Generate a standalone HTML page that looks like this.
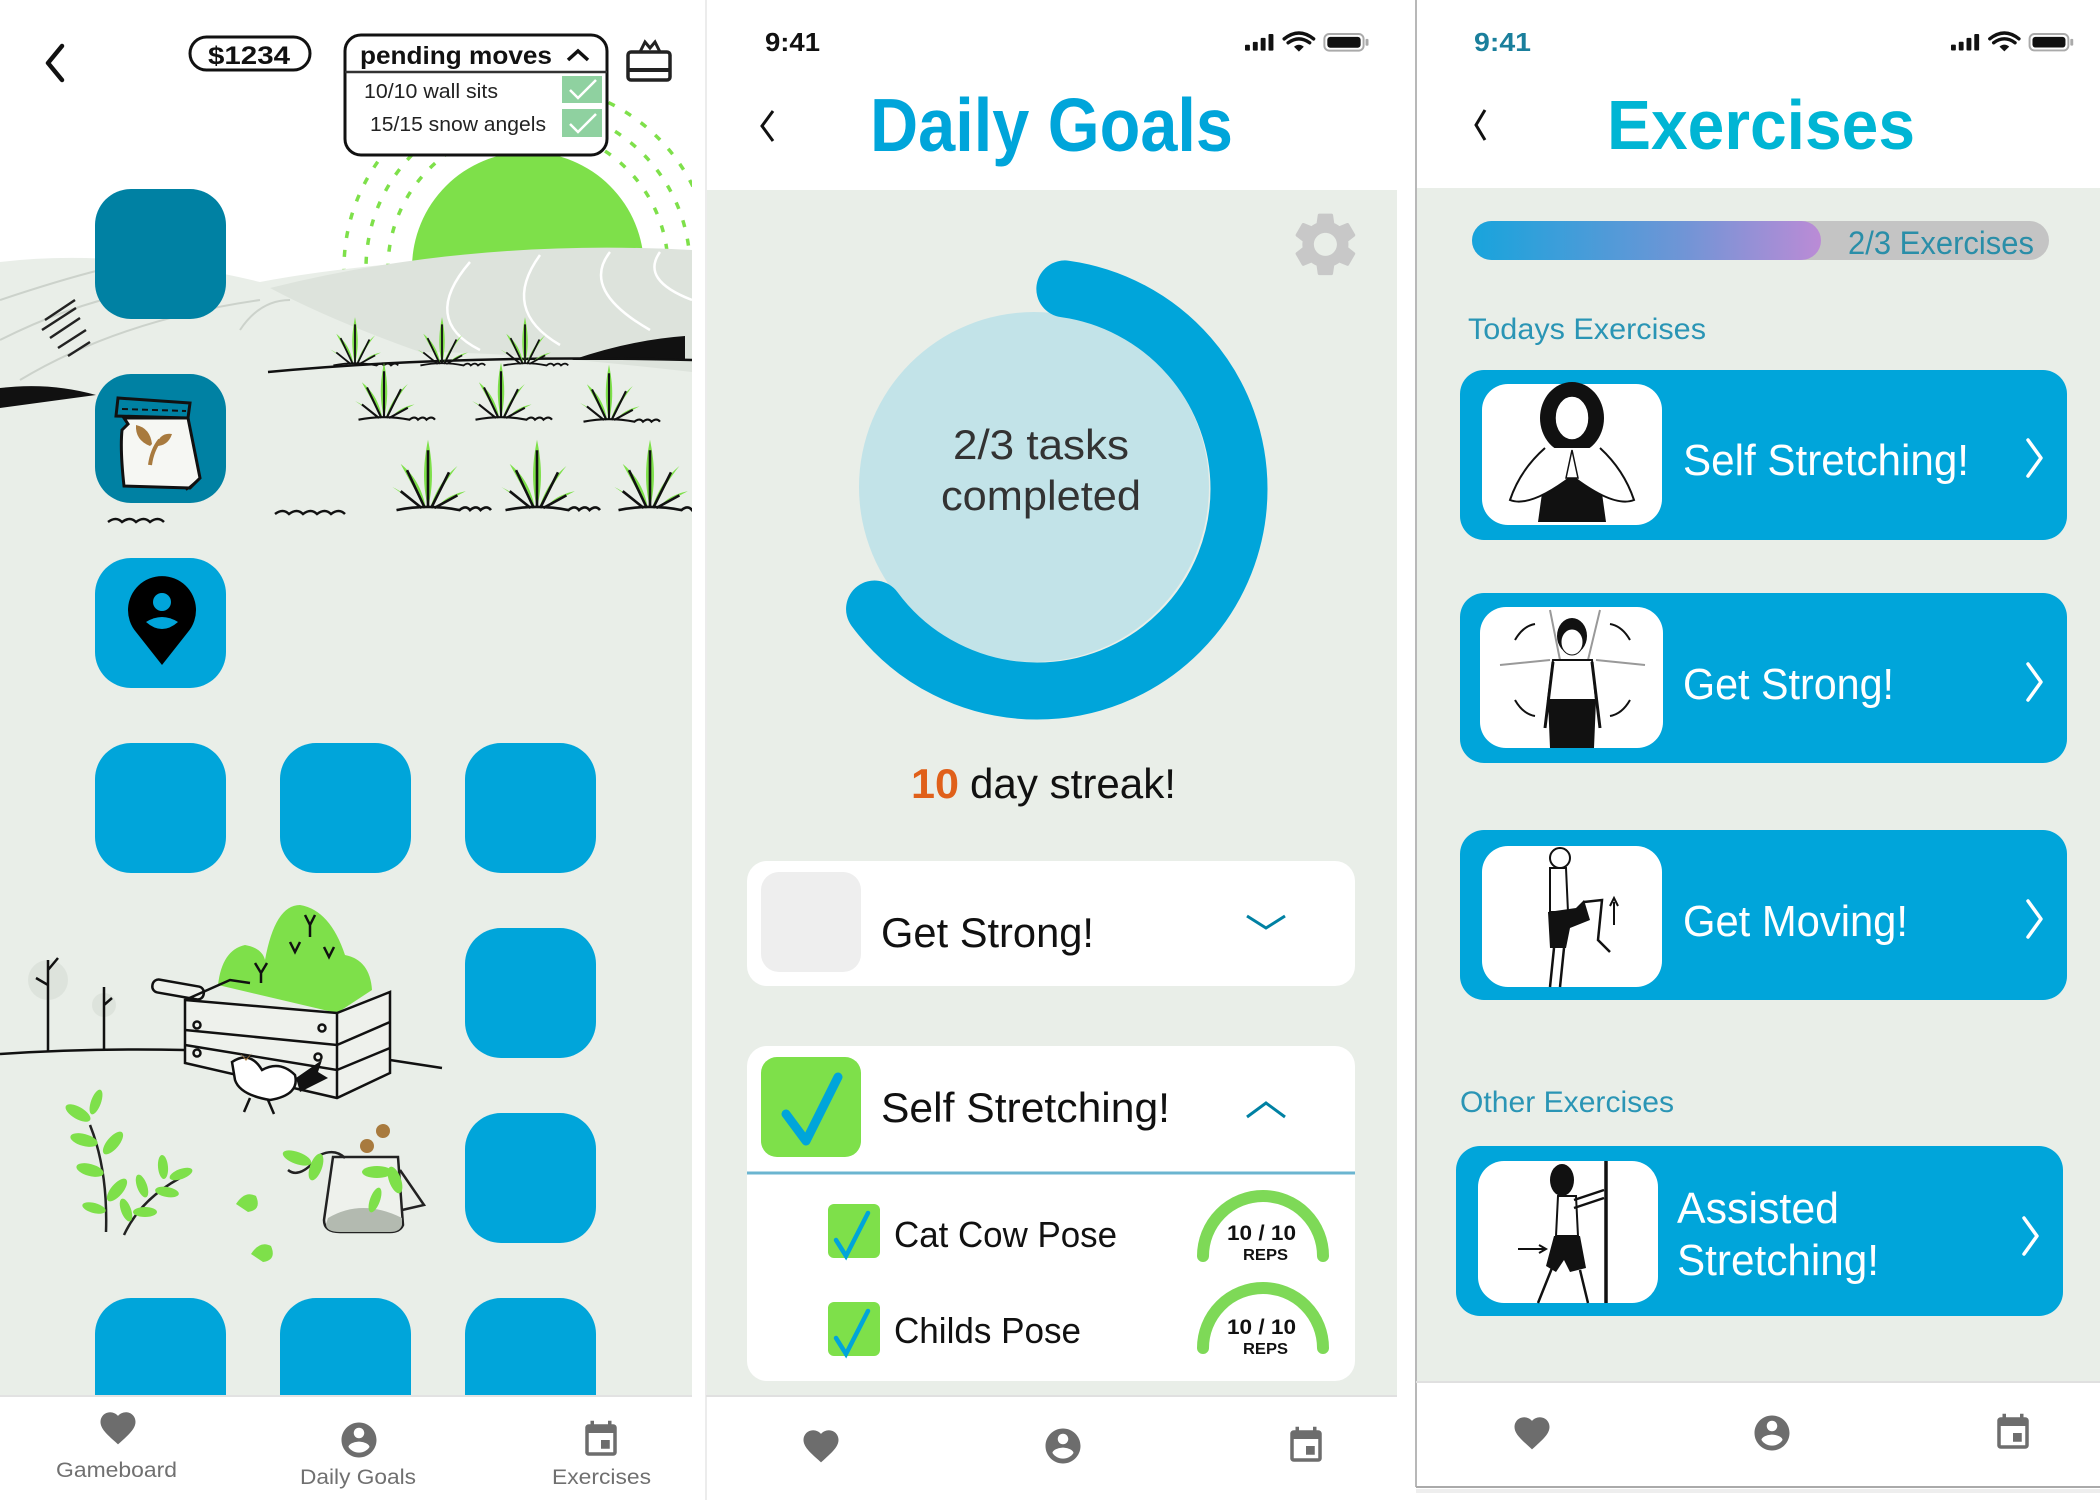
<!DOCTYPE html>
<html><head><meta charset="utf-8"><style>
html,body{margin:0;padding:0;background:#fff;width:2100px;height:1500px;overflow:hidden}
svg{display:block}
text{font-family:"Liberation Sans",Arial,sans-serif}
</style></head><body>
<svg width="2100" height="1500" viewBox="0 0 2100 1500" xmlns="http://www.w3.org/2000/svg">
<defs>
<clipPath id="p1clip"><rect x="0" y="0" width="692" height="1396"/></clipPath>
<g id="grass">
 <path d="M0 0 C-6 -25 -4 -45 0 -65 C4 -45 6 -25 0 0Z" fill="#7ee04a"/>
 <path d="M-4 0 C-12 -18 -20 -30 -26 -42 C-14 -32 -6 -20 -2 0Z" fill="#7ee04a"/>
 <path d="M4 0 C12 -18 20 -30 28 -40 C16 -30 8 -18 2 0Z" fill="#7ee04a"/>
 <path d="M-8 0 C-16 -10 -26 -16 -34 -20 C-22 -12 -14 -6 -6 0Z" fill="#7ee04a"/>
 <path d="M8 0 C16 -10 26 -14 36 -16 C24 -10 14 -4 6 0Z" fill="#7ee04a"/>
 <path d="M0 0 L0 -55 M-3 0 L-20 -36 M3 0 L20 -34 M-6 0 L-26 -16 M6 0 L28 -12" stroke="#111" stroke-width="2.5" fill="none"/>
 <path d="M-30 2 Q0 -4 30 2 q6 -5 10 0 q6 -5 10 0 q6 -5 10 0" stroke="#111" stroke-width="2.5" fill="none"/>
</g>
<path id="heart" d="M12 21.35l-1.45-1.32C5.4 15.36 2 12.28 2 8.5 2 5.420 4.42 3 7.5 3c1.74 0 3.41.81 4.5 2.09C13.09 3.81 14.76 3 16.5 3 19.58 3 22 5.42 22 8.5c0 3.78-3.4 6.86-8.55 11.54L12 21.35z"/>
<path id="person" d="M12 2C6.48 2 2 6.48 2 12s4.48 10 10 10 10-4.48 10-10S17.52 2 12 2zm0 3c1.66 0 3 1.34 3 3s-1.34 3-3 3-3-1.34-3-3 1.34-3 3-3zm0 14.2c-2.5 0-4.710-1.28-6-3.22.03-1.99 4-3.08 6-3.08 1.99 0 5.97 1.09 6 3.080-1.29 1.94-3.5 3.22-6 3.22z"/>
<path id="cal" d="M17 12h-5v5h5v-5zM16 1v2H8V1H6v2H5c-1.11 0-1.99.9-1.99 2L3 19c0 1.1.89 2 2 2h14c1.1 0 2-.9 2-2V5c0-1.1-.9-2-2-2h-1V1h-2zm3 18H5V8h14v11z"/>
<g id="status">
 <rect x="0" y="12" width="5" height="6" rx="1" fill="#111"/>
 <rect x="8" y="9" width="5" height="9" rx="1" fill="#111"/>
 <rect x="16" y="5" width="5" height="13" rx="1" fill="#111"/>
 <rect x="24" y="1" width="5" height="17" rx="1" fill="#111"/>
 <path d="M40 6 Q55 -6 70 6 M44 10 Q55 2 66 10" stroke="#111" stroke-width="3.5" fill="none" stroke-linecap="round"/>
 <path d="M50 14 L55 19 L60 14 Q55 10 50 14Z" fill="#111"/>
 <rect x="81" y="1" width="40" height="17" rx="5" fill="none" stroke="#aaa" stroke-width="2"/>
 <rect x="84" y="4" width="34" height="11" rx="3" fill="#111"/>
 <rect x="123" y="6" width="3" height="7" rx="1" fill="#aaa"/>
</g>
<linearGradient id="pg" x1="0" x2="1"><stop offset="0" stop-color="#18a4dc"/><stop offset="0.6" stop-color="#6f95d6"/><stop offset="1" stop-color="#bb8bd6"/></linearGradient>
</defs>

<!-- ============ PANEL 1 ============ -->
<rect x="0" y="0" width="692" height="1500" fill="#fff"/>
<g clip-path="url(#p1clip)">
<g fill="none" stroke="#7ee04a" stroke-width="3.5" stroke-dasharray="7 12">
 <circle cx="528" cy="268" r="140"/><circle cx="528" cy="268" r="162"/><circle cx="528" cy="268" r="184"/>
</g>
<circle cx="528" cy="268" r="116" fill="#7ee04a"/>
<path d="M0 262 Q120 248 260 282 Q420 252 692 252 L692 1396 L0 1396Z" fill="#e9eee8"/>
<path d="M270 288 Q470 238 692 250 L692 372 Q520 352 420 352 Q330 320 270 288Z" fill="#dde3dc"/>
<g fill="none" stroke="#fff" stroke-width="2.5">
 <path d="M470 262 Q420 320 480 350"/><path d="M540 255 Q500 310 560 345"/><path d="M610 252 Q580 290 650 330"/><path d="M660 252 Q640 280 692 300"/>
</g>
<g fill="none" stroke="#ccd2cb" stroke-width="2">
 <path d="M0 300 Q60 280 100 270"/><path d="M0 340 Q80 300 150 290"/><path d="M20 380 Q120 320 260 300"/><path d="M240 330 Q260 300 290 300"/>
</g>
<g stroke="#222" stroke-width="2.5">
 <path d="M45 320 l30 -20 M42 330 l34 -22 M50 338 l30 -20 M58 348 l28 -18 M68 356 l22 -14"/>
</g>
<path d="M0 408 L0 388 Q50 382 96 395Z" fill="#111"/>
<path d="M572 360 Q630 340 685 336 L685 360Z" fill="#111"/>
<path d="M268 372 Q460 354 692 360" stroke="#111" stroke-width="2.5" fill="none"/>
<path d="M275 514 q8 -6 14 0 q8 -6 14 0 q8 -6 14 0 q8 -6 14 0 q8 -6 14 0" stroke="#111" stroke-width="2.5" fill="none"/>
<path d="M108 522 q8 -6 14 0 q8 -6 14 0 q8 -6 14 0 q8 -6 14 0" stroke="#111" stroke-width="2.5" fill="none"/>
<use href="#grass" transform="translate(355,364) scale(0.72)"/>
<use href="#grass" transform="translate(442,364) scale(0.72)"/>
<use href="#grass" transform="translate(525,364) scale(0.72)"/>
<use href="#grass" transform="translate(384,418) scale(0.85)"/>
<use href="#grass" transform="translate(501,418) scale(0.85)"/>
<use href="#grass" transform="translate(609,420) scale(0.85)"/>
<use href="#grass" transform="translate(428,508) scale(1.05)"/>
<use href="#grass" transform="translate(537,508) scale(1.05)"/>
<use href="#grass" transform="translate(650,508) scale(1.05)"/>

<g>
 <rect x="95" y="189" width="131" height="130" rx="36" fill="#0081a3"/>
 <rect x="95" y="374" width="131" height="129" rx="36" fill="#0081a3"/>
 <rect x="95" y="558" width="131" height="130" rx="36" fill="#00a5da"/>
 <rect x="95" y="743" width="131" height="130" rx="36" fill="#00a5da"/>
 <rect x="280" y="743" width="131" height="130" rx="36" fill="#00a5da"/>
 <rect x="465" y="743" width="131" height="130" rx="36" fill="#00a5da"/>
 <rect x="465" y="928" width="131" height="130" rx="36" fill="#00a5da"/>
 <rect x="465" y="1113" width="131" height="130" rx="36" fill="#00a5da"/>
 <rect x="95" y="1298" width="131" height="140" rx="36" fill="#00a5da"/>
 <rect x="280" y="1298" width="131" height="140" rx="36" fill="#00a5da"/>
 <rect x="465" y="1298" width="131" height="140" rx="36" fill="#00a5da"/>
</g>
<path d="M124 418 L188 418 L200 478 L190 488 L124 486 Q120 450 122 430 L128 424Z" fill="#f6f7f3" stroke="#111" stroke-width="3"/>
<path d="M188 418 L200 478 L186 490" fill="none" stroke="#111" stroke-width="2"/>
<path d="M118 398 L190 403 L188 418 L116 416Z" fill="#0081a3" stroke="#111" stroke-width="3"/>
<path d="M122 409 L186 411" stroke="#111" stroke-width="2" stroke-dasharray="6 4"/>
<path d="M150 465 Q152 450 160 440" stroke="#a87a3e" stroke-width="4" fill="none"/>
<path d="M150 446 Q135 440 136 425 Q150 428 152 444Z" fill="#a87a3e"/>
<path d="M156 446 Q160 432 172 434 Q168 446 156 446Z" fill="#a87a3e"/>
<path d="M162 665 L136 632 A34 34 0 1 1 188 632 Z" fill="#000"/>
<circle cx="162" cy="602" r="9" fill="#00a5da"/>
<path d="M146 622 Q162 612 178 622 Q162 636 146 622Z" fill="#00a5da"/>

<g fill="none" stroke="#111" stroke-width="2.5">
 <path d="M0 1054 Q90 1048 185 1050"/>
 <path d="M390 1060 L442 1068"/>
 <circle cx="48" cy="980" r="20" fill="#dde3dc" stroke="none"/>
 <circle cx="104" cy="1005" r="12" fill="#dde3dc" stroke="none"/>
 <path d="M48 1052 L48 960 M48 985 L36 978 M48 970 L58 958"/>
 <path d="M104 1050 L104 987 M104 1005 L112 998"/>
</g>
<path d="M218 985 Q222 950 245 945 Q262 948 265 960 Q275 905 300 905 Q330 910 345 955 Q370 960 372 990 L337 1013 Z" fill="#7ee04a"/>
<g stroke="#111" stroke-width="2.5" fill="none">
 <path d="M255 963 l6 10 l6 -10 M261 973 l0 10 M305 915 l5 10 l5 -10 M310 925 l0 12 M290 942 l5 10 l5 -10 M324 947 l5 10 l5 -10"/>
</g>
<g stroke="#111" stroke-width="2.5" fill="#eef1ec">
 <rect x="152" y="983" width="52" height="13" rx="6" transform="rotate(10 178 990)"/>
 <path d="M185 1000 L337 1013 L390 992 L390 1073 L337 1098 L185 1063Z"/>
 <path d="M185 1000 L230 980 L250 983" fill="none"/>
 <path d="M337 1013 L337 1098 M185 1030 L337 1045 L390 1022 M185 1045 L337 1070 L390 1048" fill="none"/>
 <circle cx="197" cy="1025" r="3.5" fill="none"/><circle cx="322" cy="1028" r="3.5" fill="none"/>
 <circle cx="197" cy="1053" r="3.5" fill="none"/><circle cx="318" cy="1057" r="3.5" fill="none"/>
</g>
<path d="M232 1062 Q250 1050 262 1070 Q280 1060 295 1075 Q300 1095 270 1100 Q240 1095 235 1080Z" fill="#fff" stroke="#111" stroke-width="2.5"/>
<path d="M296 1078 L322 1060 L318 1072 L328 1078 L300 1092Z" fill="#111"/>
<path d="M240 1053 l6 6 l6 -6 l-6 8Z" fill="#a87a3e"/>
<path d="M250 1098 l-6 14 M268 1100 l6 14" stroke="#111" stroke-width="2.5"/>
<g stroke="#222" stroke-width="2.5" fill="none">
 <path d="M106 1232 Q108 1170 90 1125"/><path d="M124 1235 Q140 1200 180 1178"/>
</g>
<g fill="#7ee04a">
 <ellipse cx="78" cy="1113" rx="14" ry="6" transform="rotate(30 78 1113)"/>
 <ellipse cx="96" cy="1102" rx="13" ry="5" transform="rotate(-70 96 1102)"/>
 <ellipse cx="84" cy="1140" rx="14" ry="6" transform="rotate(15 84 1140)"/>
 <ellipse cx="113" cy="1143" rx="14" ry="6" transform="rotate(-50 113 1143)"/>
 <ellipse cx="90" cy="1170" rx="14" ry="6" transform="rotate(15 90 1170)"/>
 <ellipse cx="117" cy="1190" rx="14" ry="6" transform="rotate(-50 117 1190)"/>
 <ellipse cx="94" cy="1208" rx="12" ry="5" transform="rotate(15 94 1208)"/>
 <ellipse cx="126" cy="1210" rx="12" ry="5" transform="rotate(70 126 1210)"/>
 <ellipse cx="145" cy="1212" rx="12" ry="5"/>
 <ellipse cx="142" cy="1186" rx="12" ry="5" transform="rotate(70 142 1186)"/>
 <ellipse cx="167" cy="1192" rx="12" ry="5" transform="rotate(10 167 1192)"/>
 <ellipse cx="163" cy="1167" rx="12" ry="5" transform="rotate(85 163 1167)"/>
 <ellipse cx="181" cy="1174" rx="12" ry="5" transform="rotate(-20 181 1174)"/>
 <path d="M236 1204 Q245 1190 256 1196 Q262 1210 248 1212Z"/>
 <path d="M251 1254 Q260 1240 271 1246 Q277 1260 263 1262Z"/>
</g>
<path d="M333 1157 L398 1157 L403 1225 Q400 1232 390 1232 L340 1232 Q324 1232 324 1220 Z" fill="#eef1ec" stroke="#222" stroke-width="2.5"/>
<path d="M328 1218 Q362 1198 402 1218 L402 1225 Q400 1232 390 1232 L340 1232 Q326 1232 326 1224Z" fill="#b3bab0"/>
<path d="M400 1170 L424 1205 L402 1210" fill="none" stroke="#222" stroke-width="2.5"/>
<path d="M288 1170 Q300 1180 320 1155 Q335 1148 345 1158" fill="none" stroke="#222" stroke-width="2.5"/>
<circle cx="383" cy="1131" r="7" fill="#a87a3e"/><circle cx="367" cy="1146" r="7" fill="#a87a3e"/>
<g fill="#7ee04a"><ellipse cx="297" cy="1158" rx="15" ry="6" transform="rotate(20 297 1158)"/><ellipse cx="316" cy="1167" rx="14" ry="6" transform="rotate(-70 316 1167)"/><ellipse cx="377" cy="1172" rx="15" ry="6"/><ellipse cx="395" cy="1180" rx="14" ry="6" transform="rotate(70 395 1180)"/><ellipse cx="375" cy="1200" rx="13" ry="5" transform="rotate(-70 375 1200)"/></g>

<polyline points="62,46 48,63 62,80" fill="none" stroke="#111" stroke-width="4.5" stroke-linecap="round" stroke-linejoin="round"/>
<rect x="190" y="37" width="120" height="33" rx="16.5" fill="#fff" stroke="#111" stroke-width="3"/>
<text x="208" y="64" font-size="25" font-weight="bold" fill="#111" textLength="82" lengthAdjust="spacingAndGlyphs">$1234</text>
<rect x="345" y="35" width="262" height="120" rx="16" fill="#fff" stroke="#111" stroke-width="3"/>
<line x1="345" y1="72" x2="607" y2="72" stroke="#333" stroke-width="2.5"/>
<text x="360" y="64" font-size="25" font-weight="bold" fill="#111" textLength="192" lengthAdjust="spacingAndGlyphs">pending moves</text>
<polyline points="568,60 578,51 588,60" fill="none" stroke="#111" stroke-width="3.5"/>
<text x="364" y="98" font-size="20" fill="#222" textLength="134" lengthAdjust="spacingAndGlyphs">10/10 wall sits</text>
<text x="370" y="131" font-size="20" fill="#222" textLength="176" lengthAdjust="spacingAndGlyphs">15/15 snow angels</text>
<rect x="562" y="76" width="40" height="27" fill="#8fd1a0"/><rect x="562" y="109" width="40" height="28" fill="#8fd1a0"/>
<polyline points="570,90 578,98 596,80" fill="none" stroke="#fff" stroke-width="2.5"/>
<polyline points="570,124 578,132 596,114" fill="none" stroke="#fff" stroke-width="2.5"/>
<rect x="628" y="52" width="42" height="28" rx="3" fill="#fff" stroke="#222" stroke-width="3.5"/>
<line x1="628" y1="70" x2="670" y2="70" stroke="#222" stroke-width="4"/>
<path d="M640 52 L645 42 L650 48 L655 42 L660 52" fill="none" stroke="#222" stroke-width="3"/>
</g>

<rect x="0" y="1396" width="692" height="104" fill="#fff"/>
<line x1="0" y1="1396" x2="692" y2="1396" stroke="#e2e2e2" stroke-width="2"/>
<g fill="#6d6d6d">
 <use href="#heart" transform="translate(97,1407) scale(1.75)"/>
 <use href="#person" transform="translate(338,1419) scale(1.75)"/>
 <use href="#cal" transform="translate(580,1419) scale(1.75)"/>
</g>
<g fill="#707070" font-size="21">
 <text x="56" y="1477" textLength="121" lengthAdjust="spacingAndGlyphs">Gameboard</text>
 <text x="300" y="1484" textLength="116" lengthAdjust="spacingAndGlyphs">Daily Goals</text>
 <text x="552" y="1484" textLength="99" lengthAdjust="spacingAndGlyphs">Exercises</text>
</g>

<!-- ============ PANEL 2 ============ -->
<rect x="706" y="190" width="691" height="1206" fill="#e9eee8"/>
<line x1="706" y1="0" x2="706" y2="1500" stroke="#ececec" stroke-width="2"/>
<text x="765" y="51" font-size="26" font-weight="bold" fill="#111" textLength="55" lengthAdjust="spacingAndGlyphs">9:41</text>
<use href="#status" transform="translate(1245,33) scale(0.98)"/>
<polyline points="773,111 762,126 773,141" fill="none" stroke="#111" stroke-width="3"/>
<text x="870" y="151" font-size="75" font-weight="bold" fill="#00a5da" textLength="363" lengthAdjust="spacingAndGlyphs">Daily Goals</text>
<g fill="#c8c8c8" transform="translate(1287,206) scale(3.2)"><path d="M19.14 12.94c.04-.3.06-.61.06-.94 0-.32-.02-.64-.07-.94l2.03-1.58c.18-.14.23-.41.12-.61l-1.92-3.32c-.12-.22-.37-.29-.59-.22l-2.39.96c-.5-.38-1.03-.7-1.62-.94l-.36-2.54c-.04-.24-.24-.41-.48-.41h-3.84c-.24 0-.43.17-.47.41l-.36 2.54c-.59.24-1.13.57-1.62.94l-2.39-.96c-.22-.08-.47 0-.59.22L2.74 8.87c-.12.21-.08.47.12.61l2.03 1.580c-.05.3-.09.63-.09.94s.02.64.07.94l-2.03 1.58c-.18.14-.23.41-.12.61l1.92 3.32c.12.22.37.29.59.22l2.39-.96c.5.38 1.03.7 1.62.94l.36 2.54c.05.24.24.41.48.41h3.84c.24 0 .44-.17.47-.41l.36-2.54c.59-.24 1.13-.56 1.62-.94l2.39.96c.22.08.47 0 .59-.22l1.92-3.32c.12-.22.07-.47-.12-.61l-2.01-1.58zM12 15.6c-1.98 0-3.6-1.62-3.6-3.6s1.62-3.6 3.6-3.6 3.6 1.62 3.6 3.6-1.62 3.6-3.6 3.6z"/></g>
<circle cx="1034" cy="487" r="175" fill="#c2e3e8"/>
<circle cx="1037" cy="489" r="202" fill="none" stroke="#00a5da" stroke-width="57" stroke-linecap="round" stroke-dasharray="795 2000" stroke-dashoffset="-28" transform="rotate(-90 1037 489)"/>
<text x="953" y="459" font-size="42" fill="#333" textLength="176" lengthAdjust="spacingAndGlyphs">2/3 tasks</text>
<text x="941" y="510" font-size="42" fill="#333" textLength="200" lengthAdjust="spacingAndGlyphs">completed</text>
<text x="911" y="798" font-size="42" font-weight="bold" fill="#e0601a" textLength="48" lengthAdjust="spacingAndGlyphs">10</text>
<text x="970" y="798" font-size="42" fill="#111" textLength="206" lengthAdjust="spacingAndGlyphs">day streak!</text>
<rect x="747" y="861" width="608" height="125" rx="20" fill="#fff"/>
<rect x="761" y="872" width="100" height="100" rx="18" fill="#eeeeee"/>
<text x="881" y="947" font-size="42" fill="#111" textLength="213" lengthAdjust="spacingAndGlyphs">Get Strong!</text>
<polyline points="1247,916 1266,928 1285,916" fill="none" stroke="#0081a3" stroke-width="3"/>
<rect x="747" y="1046" width="608" height="335" rx="20" fill="#fff"/>
<rect x="761" y="1057" width="100" height="100" rx="16" fill="#7ee04a"/>
<polyline points="786,1114 806,1141 838,1077" fill="none" stroke="#00a5da" stroke-width="9" stroke-linecap="round" stroke-linejoin="round"/>
<text x="881" y="1122" font-size="42" fill="#111" textLength="289" lengthAdjust="spacingAndGlyphs">Self Stretching!</text>
<polyline points="1247,1117 1266,1103 1285,1117" fill="none" stroke="#0081a3" stroke-width="3"/>
<line x1="747" y1="1173" x2="1355" y2="1173" stroke="#6bb5d0" stroke-width="3"/>
<rect x="828" y="1204" width="52" height="54" rx="6" fill="#7ee04a"/>
<polyline points="836,1240 846,1256 868,1213" fill="none" stroke="#00a5da" stroke-width="4.5" stroke-linecap="round"/>
<text x="894" y="1247" font-size="36" fill="#111" textLength="223" lengthAdjust="spacingAndGlyphs">Cat Cow Pose</text>
<rect x="828" y="1302" width="52" height="54" rx="6" fill="#7ee04a"/>
<polyline points="836,1338 846,1354 868,1311" fill="none" stroke="#00a5da" stroke-width="4.5" stroke-linecap="round"/>
<text x="894" y="1343" font-size="36" fill="#111" textLength="187" lengthAdjust="spacingAndGlyphs">Childs Pose</text>
<path d="M1203 1256 A60 60 0 0 1 1323 1256" fill="none" stroke="#7ed957" stroke-width="12" stroke-linecap="round"/>
<path d="M1203 1348 A60 60 0 0 1 1323 1348" fill="none" stroke="#7ed957" stroke-width="12" stroke-linecap="round"/>
<g font-weight="bold" fill="#111">
 <text x="1227" y="1240" font-size="21" textLength="69" lengthAdjust="spacingAndGlyphs">10 / 10</text>
 <text x="1243" y="1260" font-size="16" textLength="45" lengthAdjust="spacingAndGlyphs">REPS</text>
 <text x="1227" y="1334" font-size="21" textLength="69" lengthAdjust="spacingAndGlyphs">10 / 10</text>
 <text x="1243" y="1354" font-size="16" textLength="45" lengthAdjust="spacingAndGlyphs">REPS</text>
</g>
<line x1="706" y1="1396" x2="1397" y2="1396" stroke="#e0e0e0" stroke-width="2"/>
<g fill="#6d6d6d">
 <use href="#heart" transform="translate(800,1425) scale(1.75)"/>
 <use href="#person" transform="translate(1042,1425) scale(1.75)"/>
 <use href="#cal" transform="translate(1285,1425) scale(1.75)"/>
</g>

<!-- ============ PANEL 3 ============ -->
<rect x="1416" y="188" width="684" height="1194" fill="#e9eee8"/>
<line x1="1416" y1="0" x2="1416" y2="1487" stroke="#b8b8b8" stroke-width="2"/>
<line x1="1416" y1="1487" x2="2100" y2="1487" stroke="#aaa" stroke-width="2"/>
<rect x="1416" y="1489" width="684" height="4" fill="#eee"/>
<text x="1474" y="51" font-size="26" font-weight="bold" fill="#1a7f9c" textLength="57" lengthAdjust="spacingAndGlyphs">9:41</text>
<use href="#status" transform="translate(1951,33) scale(0.97)"/>
<polyline points="1485,110 1476,125 1485,140" fill="none" stroke="#111" stroke-width="3"/>
<text x="1607" y="149" font-size="70" font-weight="bold" fill="#00b5d4" textLength="308" lengthAdjust="spacingAndGlyphs">Exercises</text>
<rect x="1472" y="221" width="577" height="39" rx="19.5" fill="#c4c4c4"/>
<rect x="1472" y="221" width="349" height="39" rx="19.5" fill="url(#pg)"/>
<text x="1848" y="254" font-size="32" fill="#2a8ea8" textLength="186" lengthAdjust="spacingAndGlyphs">2/3 Exercises</text>
<text x="1468" y="339" font-size="30" fill="#2a95b5" textLength="238" lengthAdjust="spacingAndGlyphs">Todays Exercises</text>
<text x="1460" y="1112" font-size="30" fill="#2a95b5" textLength="214" lengthAdjust="spacingAndGlyphs">Other Exercises</text>
<g fill="#00a5da">
 <rect x="1460" y="370" width="607" height="170" rx="24"/>
 <rect x="1460" y="593" width="607" height="170" rx="24"/>
 <rect x="1460" y="830" width="607" height="170" rx="24"/>
 <rect x="1456" y="1146" width="607" height="170" rx="24"/>
</g>
<g fill="#fff">
 <rect x="1482" y="384" width="180" height="141" rx="26"/>
 <rect x="1480" y="607" width="183" height="141" rx="26"/>
 <rect x="1482" y="846" width="180" height="141" rx="26"/>
 <rect x="1478" y="1161" width="180" height="142" rx="26"/>
</g>
<g fill="#fff" font-size="44">
 <text x="1683" y="475" textLength="286" lengthAdjust="spacingAndGlyphs">Self Stretching!</text>
 <text x="1683" y="699" textLength="211" lengthAdjust="spacingAndGlyphs">Get Strong!</text>
 <text x="1683" y="936" textLength="225" lengthAdjust="spacingAndGlyphs">Get Moving!</text>
 <text x="1677" y="1223" textLength="162" lengthAdjust="spacingAndGlyphs">Assisted</text>
 <text x="1677" y="1275" textLength="202" lengthAdjust="spacingAndGlyphs">Stretching!</text>
</g>
<g fill="none" stroke="#fff" stroke-width="3.5" stroke-linecap="round" stroke-linejoin="round">
 <polyline points="2028,440 2041,458 2028,476"/>
 <polyline points="2028,664 2041,682 2028,700"/>
 <polyline points="2028,901 2041,919 2028,937"/>
 <polyline points="2024,1218 2037,1236 2024,1254"/>
</g>
<ellipse cx="1572" cy="418" rx="32" ry="36" fill="#111"/>
<ellipse cx="1572" cy="418" rx="17" ry="22" fill="#fff" stroke="#111" stroke-width="1.5"/>
<path d="M1548 450 L1596 450 L1606 522 L1538 522Z" fill="#111"/>
<path d="M1545 448 Q1520 470 1510 500 Q1530 508 1572 476 Q1614 508 1634 500 Q1624 470 1600 448" fill="#fff" stroke="#111" stroke-width="2"/>
<path d="M1566 478 L1572 450 L1578 478Z" fill="#fff" stroke="#111" stroke-width="1.5"/>
<g stroke="#999" stroke-width="2" fill="none"><path d="M1550 610 L1560 660 M1600 610 L1588 660 M1500 665 L1550 660 M1645 665 L1596 660"/></g>
<ellipse cx="1572" cy="636" rx="15" ry="18" fill="#111"/><ellipse cx="1572" cy="642" rx="11" ry="13" fill="#fff" stroke="#111"/>
<path d="M1553 660 L1592 660 L1596 700 L1548 700Z" fill="#fff" stroke="#111" stroke-width="2"/>
<path d="M1548 700 L1596 700 L1594 748 L1550 748Z" fill="#111"/>
<path d="M1553 662 L1545 728 M1592 662 L1600 728" stroke="#111" stroke-width="3"/>
<g stroke="#111" stroke-width="2" fill="none"><path d="M1515 640 q8 -14 20 -16 M1630 640 q-8 -14 -20 -16 M1515 700 q8 14 20 16 M1630 700 q-8 14 -20 16"/></g>
<circle cx="1560" cy="858" r="10" fill="#fff" stroke="#111" stroke-width="2"/>
<path d="M1550 868 L1566 868 L1568 912 L1550 912Z" fill="#fff" stroke="#111" stroke-width="2"/>
<path d="M1548 912 L1576 908 L1584 900 L1590 920 L1570 928 L1566 948 L1550 948Z" fill="#111"/>
<path d="M1584 902 L1602 900 L1598 940 L1610 952 M1554 948 L1550 987 M1564 948 L1560 987" stroke="#111" stroke-width="2.5" fill="none"/>
<path d="M1614 925 L1614 902 M1610 906 L1614 898 L1618 906" stroke="#111" stroke-width="2" fill="none"/>
<line x1="1606" y1="1161" x2="1606" y2="1303" stroke="#111" stroke-width="3.5"/>
<ellipse cx="1562" cy="1180" rx="12" ry="16" fill="#111"/>
<path d="M1558 1196 L1576 1196 L1578 1236 L1556 1236Z" fill="#fff" stroke="#111" stroke-width="2"/>
<path d="M1574 1200 L1604 1190 M1574 1208 L1604 1198" stroke="#111" stroke-width="2.5"/>
<path d="M1554 1236 L1580 1236 L1586 1268 L1570 1272 L1564 1260 L1556 1272 L1546 1266Z" fill="#111"/>
<path d="M1552 1268 L1538 1303 M1580 1270 L1588 1303" stroke="#111" stroke-width="2.5"/>
<path d="M1518 1249 L1545 1249 M1539 1245 L1546 1249 L1539 1253" stroke="#111" stroke-width="2" fill="none"/>
<line x1="1416" y1="1382" x2="2100" y2="1382" stroke="#e0e0e0" stroke-width="2"/>
<g fill="#6d6d6d">
 <use href="#heart" transform="translate(1511,1412) scale(1.75)"/>
 <use href="#person" transform="translate(1751,1412) scale(1.75)"/>
 <use href="#cal" transform="translate(1992,1412) scale(1.75)"/>
</g>
</svg>
</body></html>
